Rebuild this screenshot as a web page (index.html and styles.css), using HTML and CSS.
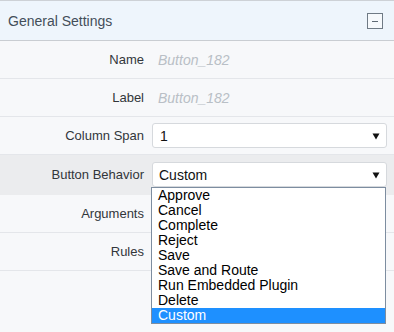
FILE: index.html
```html
<!DOCTYPE html>
<html lang="en">
<head>
    <meta charset="UTF-8">
    <title>General Settings</title>
    <link rel="stylesheet" href="styles.css">
</head>
<body>
    <div class="panel">
        <div class="panel-header">
            <span class="panel-title">General Settings</span>
            <span class="collapse-btn"><span class="minus"></span></span>
        </div>

        <div class="row">
            <label class="row-label">Name</label>
            <div class="row-value"><span class="placeholder">Button_182</span></div>
        </div>
        <div class="row">
            <label class="row-label">Label</label>
            <div class="row-value"><span class="placeholder">Button_182</span></div>
        </div>
        <div class="row">
            <label class="row-label">Column Span</label>
            <div class="row-value">
                <div class="select">
                    <span class="select-text">1</span>
                    <svg class="caret" width="8" height="7" viewBox="0 0 8 7"><path d="M0.5 0.5h7L4 6.5z" fill="#111"/></svg>
                </div>
            </div>
        </div>
        <div class="row active">
            <label class="row-label">Button Behavior</label>
            <div class="row-value">
                <div class="select open">
                    <span class="select-text">Custom</span>
                    <svg class="caret" width="8" height="7" viewBox="0 0 8 7"><path d="M0.5 0.5h7L4 6.5z" fill="#111"/></svg>
                    <ul class="options">
                        <li>Approve</li>
                        <li>Cancel</li>
                        <li>Complete</li>
                        <li>Reject</li>
                        <li>Save</li>
                        <li>Save and Route</li>
                        <li>Run Embedded Plugin</li>
                        <li>Delete</li>
                        <li class="selected">Custom</li>
                    </ul>
                </div>
            </div>
        </div>
        <div class="row">
            <label class="row-label">Arguments</label>
            <div class="row-value"></div>
        </div>
        <div class="row">
            <label class="row-label">Rules</label>
            <div class="row-value"></div>
        </div>
    </div>
</body>
</html>
```

FILE: styles.css
```css
html, body {
    height: 100%;
}
body {
    margin: 0;
    min-height: 332px;
    background: #f7f8fa;
    font-family: "Liberation Sans", Arial, sans-serif;
}
.panel {
    min-height: 331px;
    border-top: 1px solid #cdd1d6;
}
.panel-header {
    display: flex;
    align-items: center;
    justify-content: space-between;
    height: 39px;
    padding: 0 11px 0 8px;
    background: #eef5fc;
    border-bottom: 1px solid #c9cdd2;
}
.panel-title {
    font-size: 14px;
    color: #434e59;
}
.collapse-btn {
    display: flex;
    align-items: center;
    justify-content: center;
    width: 14px;
    height: 14px;
    border: 1px solid #6f7a85;
    background: #f6f9fc;
    margin-top: 1px;
}
.minus {
    width: 6px;
    height: 1px;
    background: #5f6a75;
}
.row {
    display: grid;
    grid-template-columns: 144px 1fr;
    column-gap: 8px;
    align-items: center;
    min-height: 37px;
    padding-right: 7px;
    border-bottom: 1px solid #e4e6ea;
}
.row.active {
    min-height: 39px;
    background: #ebecee;
    border-bottom-color: #ebecee;
}
.row-label {
    text-align: right;
    font-size: 13px;
    color: #32363a;
}
.placeholder {
    padding-left: 6px;
    font-size: 14px;
    font-style: italic;
    color: #b9bfc6;
}
.select {
    position: relative;
    display: flex;
    align-items: center;
    justify-content: space-between;
    height: 23px;
    padding: 0 6px 0 7px;
    background: #fff;
    border: 1px solid #d6d9dd;
    border-radius: 3px;
}
.select-text {
    font-size: 14px;
    color: #111;
}
.select.open .select-text {
    margin-left: -1px;
}
.caret {
    display: block;
    margin-top: 1px;
}
.options {
    position: absolute;
    top: 24px;
    left: -2px;
    width: 233px;
    margin: 0;
    padding: 0;
    list-style: none;
    background: #fff;
    border: 1px solid #7d8da0;
    z-index: 2;
}
.options li {
    height: 15px;
    line-height: 15px;
    padding-left: 6px;
    font-size: 14px;
    color: #000;
}
.options li.selected {
    background: #1e90ff;
    color: #fff;
}
```
